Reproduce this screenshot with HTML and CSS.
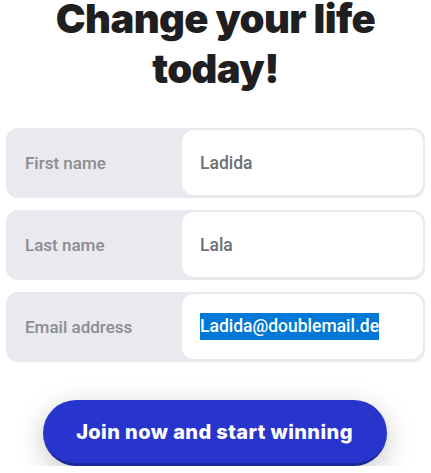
FILE: index.html
```html
<!DOCTYPE html>
<html lang="en">

<head>
    <meta charset="UTF-8">
    <meta name="viewport" content="width=device-width, initial-scale=1.0">
    <title>Change your life</title>
    <link rel="stylesheet" href="styles.css">
</head>

<body>

    <h1>Change your life<br>today!</h1>

    <form action="">
        <label class="row">
            <span class="label">First name</span>
            <span class="field"><span class="value">Ladida</span></span>
        </label>

        <label class="row">
            <span class="label">Last name</span>
            <span class="field"><span class="value">Lala</span></span>
        </label>

        <label class="row">
            <span class="label">Email address</span>
            <span class="field"><span class="value selected">Ladida@doublemail.de</span></span>
        </label>

        <button type="submit">Join now and start winning</button>
    </form>

</body>

</html>
```

FILE: styles.css
```css
body {
    font-family: Roboto, "Liberation Sans", sans-serif;
    background: #fff;
    margin: 0;
    padding: 0 6px;
    color: #1f1f1f;
}

h1 {
    font-family: Inter, Roboto, sans-serif;
    font-weight: 900;
    font-size: 40px;
    line-height: 50px;
    letter-spacing: -0.6px;
    text-align: center;
    margin: -6px 0 0;
    color: #1f1f21;
}

form {
    display: flex;
    flex-direction: column;
    gap: 12px;
    margin-top: 34px;

    button {
        align-self: center;
        margin: 26px 0 0 -2px;
        width: 344px;
        height: 66px;
        border: 0;
        border-bottom: 3px solid #1c2797;
        border-radius: 33px;
        background: #2835cc;
        color: #fff;
        font-family: Inter, Roboto, sans-serif;
        font-weight: 800;
        font-size: 20px;
        letter-spacing: 0.4px;
        box-shadow: 0 8px 28px rgba(0, 0, 0, 0.22);
        cursor: pointer;
    }
}

.row {
    display: flex;
    height: 70px;
    background: #e9e9ef;
    border: 2px solid #e9e9ef;
    border-bottom-width: 3px;
    border-radius: 12px;
    box-sizing: border-box;

    .label {
        width: 174px;
        box-sizing: border-box;
        padding-left: 17px;
        display: flex;
        align-items: center;
        font-size: 17px;
        font-weight: 500;
        color: #8c8c90;
    }

    .field {
        flex-grow: 1;
        display: flex;
        align-items: center;
        padding-left: 18px;
        background: #fff;
        border-radius: 12px;
        font-size: 17.5px;
        font-weight: 500;
        color: #6d7077;
    }

    .selected {
        background: #0078d7;
        color: #fff;
        padding: 3px 0 4px;
    }
}
```
